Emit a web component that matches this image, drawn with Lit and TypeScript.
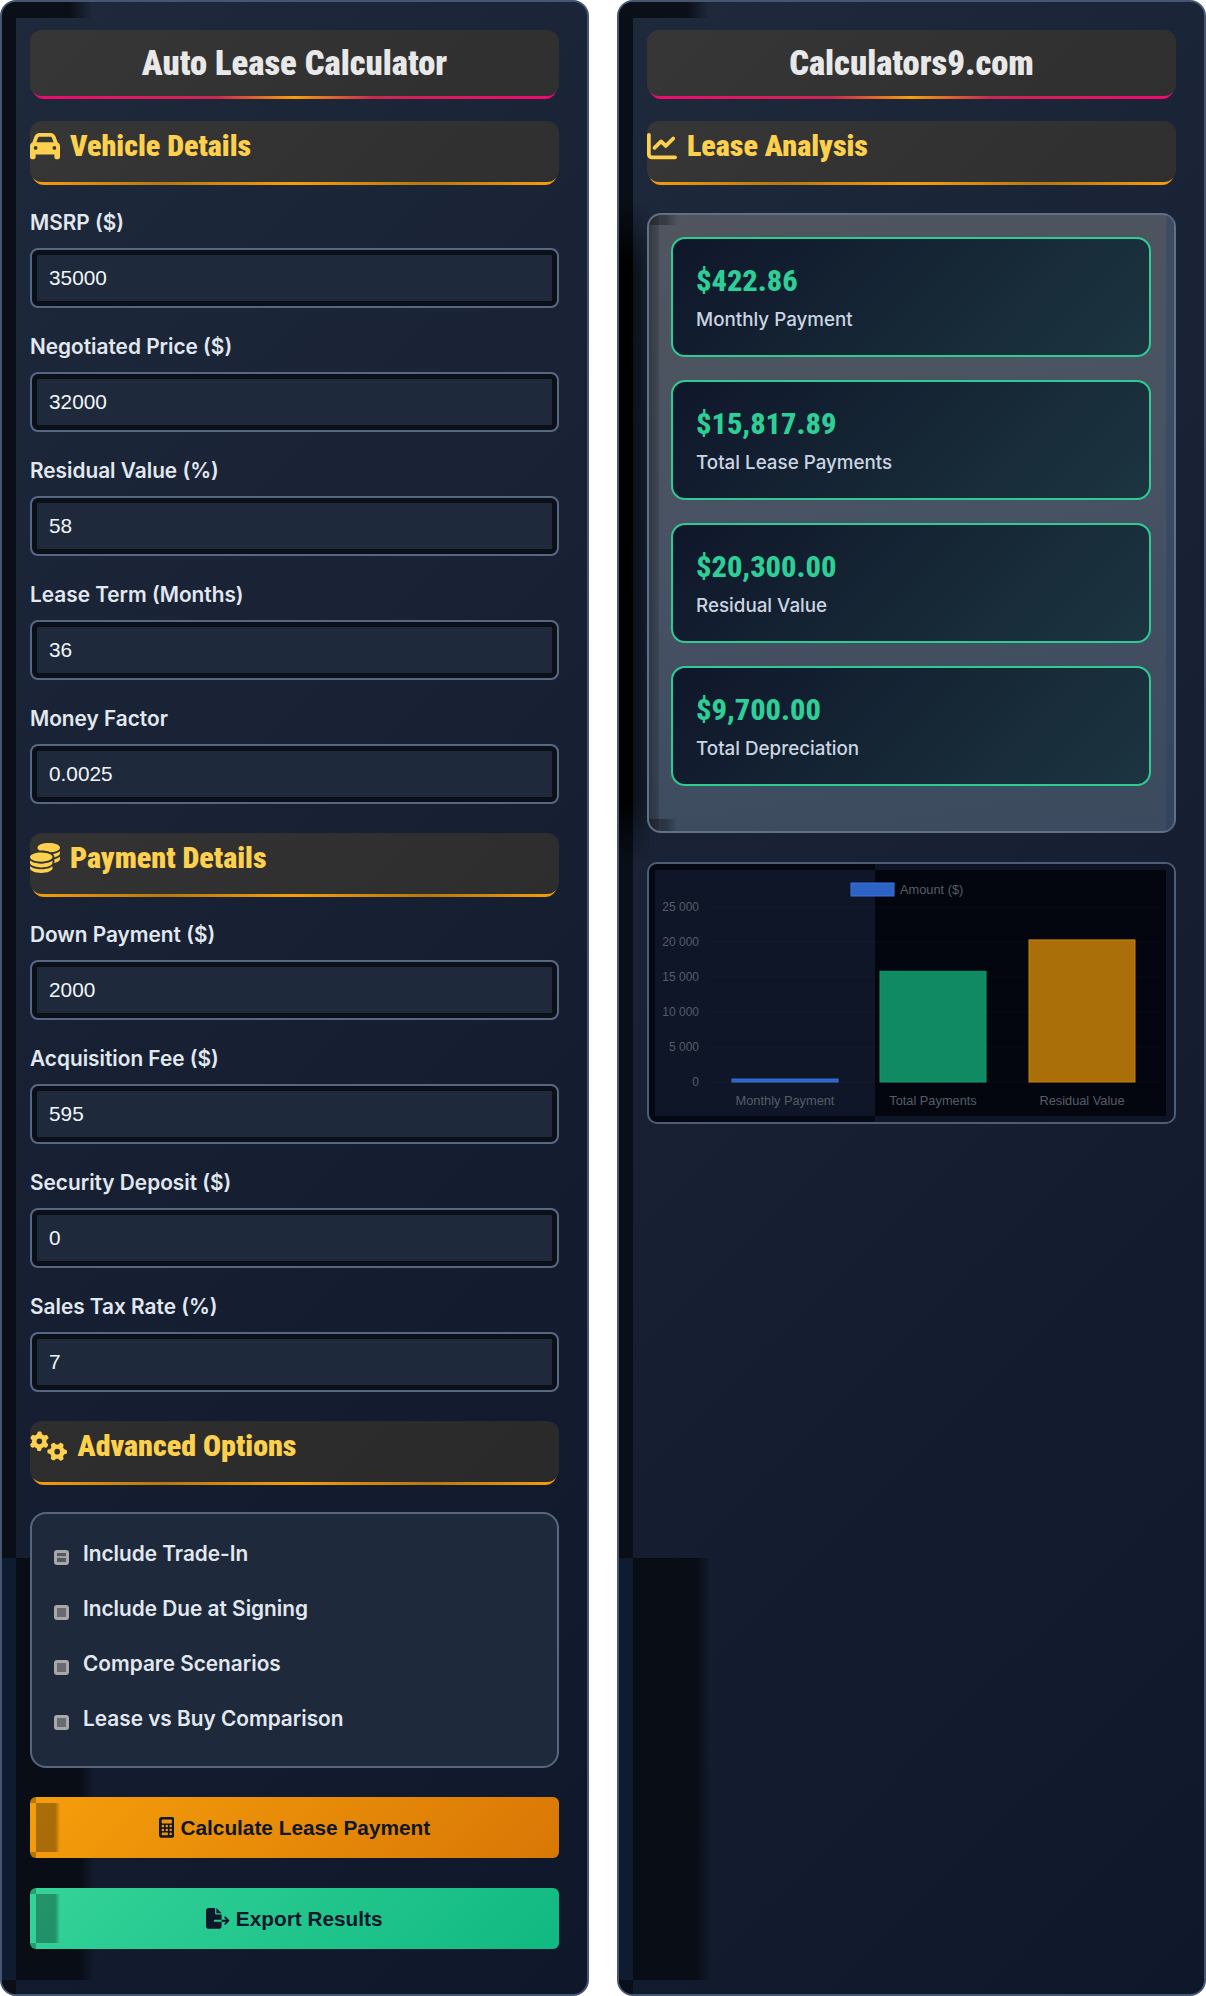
import { LitElement, html, css, svg } from "lit";
import { customElement } from "lit/decorators.js";

const ICONS: Record<string, [number, string]> = {
  car: [512, "M135.2 117.4L109.1 192H402.9l-26.1-74.6C372.3 104.6 360.2 96 346.6 96H165.4c-13.6 0-25.7 8.6-30.2 21.4zM39.6 196.8L74.8 96.3C88.3 57.8 124.6 32 165.4 32H346.6c40.8 0 77.1 25.8 90.6 64.3l35.2 100.5c23.2 9.6 39.6 32.5 39.6 59.2V400v48c0 17.7-14.3 32-32 32H448c-17.7 0-32-14.3-32-32V400H96v48c0 17.7-14.3 32-32 32H32c-17.7 0-32-14.3-32-32V400 256c0-26.7 16.4-49.6 39.6-59.2zM128 288a32 32 0 1 0 -64 0 32 32 0 1 0 64 0zm288 32a32 32 0 1 0 0-64 32 32 0 1 0 0 64z"],
  chart: [512, "M64 64c0-17.7-14.3-32-32-32S0 46.3 0 64V400c0 44.2 35.8 80 80 80H480c17.7 0 32-14.3 32-32s-14.3-32-32-32H80c-8.8 0-16-7.2-16-16V64zm406.6 86.6c12.5-12.5 12.5-32.8 0-45.3s-32.8-12.5-45.3 0L320 210.7l-57.4-57.4c-12.5-12.5-32.8-12.5-45.3 0l-112 112c-12.5 12.5-12.5 32.8 0 45.3s32.8 12.5 45.3 0L240 221.3l57.4 57.4c12.5 12.5 32.8 12.5 45.3 0l128-128z"],
  coins: [512, "M512 80c0 18-14.3 34.6-38.4 48c-29.1 16.1-72.5 27.5-122.3 30.9c-3.7-1.8-7.4-3.5-11.3-5C300.6 137.4 248.2 128 192 128c-8.3 0-16.4 .2-24.5 .6l-1.1-.6C142.3 114.6 128 98 128 80c0-44.2 86-80 192-80S512 35.8 512 80zM160.7 161.1c10.2-.7 20.7-1.1 31.3-1.1c62.2 0 117.4 12.3 152.5 31.4C369.3 204.9 384 221.7 384 240c0 4-.7 7.9-2.1 11.7c-4.6 13.2-17 25.3-35 35.5c0 0 0 0 0 0c-.1 .1-.3 .1-.4 .2l0 0 0 0c-.3 .2-.6 .3-.9 .5c-35 19.4-90.8 32-153.6 32c-59.6 0-112.9-11.3-148.2-29.1c-1.9-.9-3.7-1.9-5.5-2.9C14.3 274.6 0 258 0 240c0-34.8 53.4-64.5 128-75.4c10.5-1.5 21.4-2.7 32.7-3.5zM416 240c0-21.9-10.6-39.9-24.1-53.4c28.3-4.4 54.2-11.4 76.2-20.5c16.3-6.8 31.5-15.2 43.9-25.5V176c0 19.3-16.5 37.1-43.8 50.9c-14.6 7.4-32.4 13.7-52.4 18.5c.1-1.8 .2-3.5 .2-5.3zm-32 96c0 18-14.3 34.6-38.4 48c-1.8 1-3.6 1.9-5.5 2.9C304.9 404.7 251.6 416 192 416c-62.8 0-118.6-12.6-153.6-32C14.3 370.6 0 354 0 336V300.6c12.5 10.3 27.6 18.7 43.9 25.5C83.4 342.6 135.8 352 192 352s108.6-9.4 148.1-25.9c7.8-3.2 15.3-6.9 22.4-10.9c6.1-3.4 11.8-7.2 17.2-11.2c1.5-1.1 2.9-2.3 4.3-3.4V304v5.7V336zm32 0V304 278.1c19-4.2 36.5-9.5 52.1-16c16.3-6.8 31.5-15.2 43.9-25.5V272c0 10.5-5 21-14.9 30.9c-16.3 16.3-45 29.7-81.3 38.4c.1-1.7 .2-3.5 .2-5.3zM192 448c56.2 0 108.6-9.4 148.1-25.9c16.3-6.8 31.5-15.2 43.9-25.5V432c0 44.2-86 80-192 80S0 476.2 0 432V396.6c12.5 10.3 27.6 18.7 43.9 25.5C83.4 438.6 135.8 448 192 448z"],
  gears: [640, "M308.5 135.3c7.1-6.3 9.9-16.2 6.2-25c-2.3-5.3-4.8-10.5-7.6-15.5L304 89.4c-3-5-6.3-9.9-9.8-14.6c-5.7-7.6-15.7-10.1-24.7-7.1l-28.2 9.3c-10.7-8.8-23-16-36.2-20.9L198 27.9c-1.9-9.3-9.1-16.7-18.5-17.8C173.9 9.4 168.2 9 162.4 9c-.3 0-.5 0-.8 0c-5.8 0-11.5 .4-17.1 1.1c-9.4 1.1-16.6 8.4-18.5 17.8L120 56.9c-13.2 5-25.4 12.1-36.2 20.9L55.6 68.6c-9-3-19-.5-24.7 7.1c-3.5 4.7-6.8 9.6-9.9 14.6l-3 5.3c-2.8 5-5.3 10.2-7.6 15.6c-3.7 8.7-.9 18.6 6.2 25l22.2 19.8C32.6 161.9 32 168.9 32 176s.6 14.1 1.7 20.9L11.5 216.7c-7.1 6.3-9.9 16.2-6.2 25c2.3 5.3 4.8 10.5 7.6 15.6l3 5.2c3 5.1 6.3 9.9 9.9 14.6c5.7 7.6 15.7 10.1 24.7 7.1l28.2-9.3c10.7 8.8 23 16 36.2 20.9l6.1 29.1c1.9 9.3 9.1 16.7 18.5 17.8c5.7 .7 11.5 1.1 17.4 1.1s11.7-.4 17.4-1.1c9.4-1.1 16.6-8.5 18.5-17.8l6.1-29.1c13.2-5 25.4-12.1 36.2-20.9l28.2 9.3c9 3 19 .5 24.7-7.1c3.5-4.7 6.8-9.5 9.8-14.6l3.1-5.4c2.8-5 5.3-10.2 7.6-15.5c3.7-8.7 .9-18.6-6.2-25l-22.2-19.8c1.1-6.8 1.7-13.8 1.7-20.9s-.6-14.1-1.7-20.9l22.2-19.8zM112 176a48 48 0 1 1 96 0 48 48 0 1 1 -96 0zM504.7 500.5c6.3 7.1 16.2 9.9 25 6.2c5.3-2.3 10.5-4.8 15.5-7.6l5.4-3.1c5-3 9.9-6.3 14.6-9.8c7.6-5.7 10.1-15.7 7.1-24.7l-9.3-28.2c8.8-10.7 16-23 20.9-36.2l29.1-6.1c9.3-1.9 16.7-9.1 17.8-18.5c.7-5.7 1.1-11.5 1.1-17.4s-.4-11.7-1.1-17.4c-1.1-9.4-8.5-16.6-17.8-18.5l-29.1-6.1c-5-13.2-12.1-25.4-20.9-36.2l9.3-28.2c3-9 .5-19-7.1-24.7c-4.7-3.5-9.6-6.8-14.6-9.9l-5.3-3c-5-2.8-10.2-5.3-15.6-7.6c-8.7-3.7-18.6-.9-25 6.2l-19.8 22.2c-6.8-1.1-13.8-1.7-20.9-1.7s-14.1 .6-20.9 1.7l-19.8-22.2c-6.3-7.1-16.2-9.9-25-6.2c-5.3 2.3-10.5 4.8-15.6 7.6l-5.2 3c-5.1 3-9.9 6.3-14.6 9.9c-7.6 5.7-10.1 15.7-7.1 24.7l9.3 28.2c-8.8 10.7-16 23-20.9 36.2L315.1 313c-9.3 1.9-16.7 9.1-17.8 18.5c-.7 5.7-1.1 11.5-1.1 17.4s.4 11.7 1.1 17.4c1.1 9.4 8.5 16.6 17.8 18.5l29.1 6.1c5 13.2 12.1 25.4 20.9 36.2l-9.3 28.2c-3 9-.5 19 7.1 24.7c4.7 3.5 9.5 6.8 14.6 9.8l5.4 3.1c5 2.8 10.2 5.3 15.5 7.6c8.7 3.7 18.6 .9 25-6.2l19.8-22.2c6.8 1.1 13.8 1.7 20.9 1.7s14.1-.6 20.9-1.7l19.8 22.2zM464 304a48 48 0 1 1 0 96 48 48 0 1 1 0-96z"],
  calc: [384, "M64 0C28.7 0 0 28.7 0 64V448c0 35.3 28.7 64 64 64H320c35.3 0 64-28.7 64-64V64c0-35.3-28.7-64-64-64H64zM96 64H288c17.7 0 32 14.3 32 32v32c0 17.7-14.3 32-32 32H96c-17.7 0-32-14.3-32-32V96c0-17.7 14.3-32 32-32zm32 160a32 32 0 1 1 -64 0 32 32 0 1 1 64 0zM96 352a32 32 0 1 1 0-64 32 32 0 1 1 0 64zM64 416c0-17.7 14.3-32 32-32h96c17.7 0 32 14.3 32 32s-14.3 32-32 32H96c-17.7 0-32-14.3-32-32zM192 256a32 32 0 1 1 0-64 32 32 0 1 1 0 64zm32 64a32 32 0 1 1 -64 0 32 32 0 1 1 64 0zm64-64a32 32 0 1 1 0-64 32 32 0 1 1 0 64zm32 64a32 32 0 1 1 -64 0 32 32 0 1 1 64 0zM288 448a32 32 0 1 1 0-64 32 32 0 1 1 0 64z"],
  exportf: [576, "M0 64C0 28.7 28.7 0 64 0H224V128c0 17.7 14.3 32 32 32H384V288H216c-13.3 0-24 10.7-24 24s10.7 24 24 24H384V448c0 35.3-28.7 64-64 64H64c-35.3 0-64-28.7-64-64V64zM384 336V288H494.1l-39-39c-9.4-9.4-9.4-24.6 0-33.9s24.6-9.4 33.9 0l80 80c9.4 9.4 9.4 24.6 0 33.9l-80 80c-9.4 9.4-24.6 9.4-33.9 0s-9.4-24.6 0-33.9l39-39H384zm0-208H256V0L384 128z"],
};

const icon = (n: string) => {
  const [w, d] = ICONS[n];
  return html`<svg class="ic" viewBox="0 0 ${w} 512" style="width:${w / 512}em" aria-hidden="true"><path fill="currentColor" d=${d}></path></svg>`;
};

const VEHICLE = [["MSRP ($)", "35000"], ["Negotiated Price ($)", "32000"], ["Residual Value (%)", "58"], ["Lease Term (Months)", "36"], ["Money Factor", "0.0025"]];
const PAYMENT = [["Down Payment ($)", "2000"], ["Acquisition Fee ($)", "595"], ["Security Deposit ($)", "0"], ["Sales Tax Rate (%)", "7"]];
const OPTIONS = ["Include Trade-In", "Include Due at Signing", "Compare Scenarios", "Lease vs Buy Comparison"];
const RESULTS = [["$422.86", "Monthly Payment"], ["$15,817.89", "Total Lease Payments"], ["$20,300.00", "Residual Value"], ["$9,700.00", "Total Depreciation"]];
const TICKS = [25000, 20000, 15000, 10000, 5000, 0];
const BARS = [
  { label: "Monthly Payment", value: 422.86, x: 77, fill: "#2d63c4", edge: "#3b74dc" },
  { label: "Total Payments", value: 15817.89, x: 225, fill: "#0f8a62", edge: "#129a6e" },
  { label: "Residual Value", value: 20300, x: 374, fill: "#aa6f08", edge: "#c98210" },
];

@customElement("app-root")
export class AppRoot extends LitElement {
  static styles = css`
    :host { display: block; width: 1206px; height: 1996px; background: #fff; font-family: "Inter", "Liberation Sans", sans-serif; }
    * { box-sizing: border-box; }
    .page { display: grid; grid-template-columns: 589px 589px; gap: 28px; height: 1996px; }
    .panel { position: relative; overflow: hidden; border: 2px solid #465670; border-radius: 16px; padding: 28px; background: linear-gradient(135deg, #1e293b, #0f172a); }
    .panel > .content { position: relative; }
    .art { position: absolute; }
    .a-top { left: 0; top: 0; width: 90px; height: 16px; background: linear-gradient(90deg, #0b1018 75%, rgba(11,16,24,0)); }
    .a-strip { left: 0; top: 16px; width: 14px; height: 1540px; background: #0a0f17; }
    .a-low { left: 0; top: 1556px; width: 14px; height: 422px; background: #0f1c30; }
    .a-block { left: 14px; top: 1556px; width: 78px; height: 422px; background: linear-gradient(90deg, #090d15 82%, rgba(9,13,21,0)); }
    .a-corner { left: 0; top: 1978px; width: 14px; height: 16px; background: #0a0f17; }
    .a-shade { left: 0; top: 200px; width: 30px; height: 660px; background: linear-gradient(90deg, #000 0 14px, rgba(0,0,0,.55) 14px, rgba(0,0,0,.2) 100%); -webkit-mask-image: linear-gradient(180deg, transparent, #000 10%, #000 90%, transparent); mask-image: linear-gradient(180deg, transparent, #000 10%, #000 90%, transparent); }

    .title, .head { position: relative; z-index: 0; }
    .title::before, .head::before { content: ""; position: absolute; inset: 0; z-index: -1; border-radius: 12px; background: linear-gradient(135deg, #363636, #2f2f2f); }
    .title::after, .head::after { content: ""; position: absolute; top: 50%; z-index: -2; border-radius: 0 0 12px 12px; }
    .title { height: 66px; margin-bottom: 25px; display: flex; align-items: center; justify-content: center; padding-top: 1px; color: #e8e8e8; font: 900 34.6px/1 "Roboto", sans-serif; font-stretch: 75%; }
    .title::after { left: 2px; right: 2px; bottom: -3px; background: linear-gradient(90deg, #ef0a73, #c9294f 35%, #f59e0b 50%, #c9294f 65%, #ef0a73); }
    .head { height: 61px; margin-bottom: 26px; padding-top: 7px; display: flex; align-items: flex-start; gap: 10px; color: #fdd14d; font: 900 30px/36px "Roboto", sans-serif; font-stretch: 75%; }
    .head::after { left: 2px; right: 2px; bottom: -3px; background: linear-gradient(90deg, #f59e0b, #b8780f 25%, #f59e0b 50%, #b8780f 75%, #f59e0b); }
    .head .ic { margin-top: 3px; font-size: 30px; }
    .head.mid { margin-top: 29px; }
    .head.mid::before { background: linear-gradient(135deg, #333, #2d2d2d); }
    .head.dark { margin-top: 29px; margin-bottom: 30px; }
    .head.dark::before { background: linear-gradient(135deg, #2e2e2e, #2a2a2a); }
    .head.right { margin-bottom: 31px; }
    .ic { display: block; height: 1em; flex: none; }

    .field { margin-bottom: 24px; }
    .field label { display: block; height: 30px; margin-bottom: 10px; color: #e2e8f0; font: 600 20.8px/30px "Inter", sans-serif; }
    .field input { display: block; width: 100%; height: 60px; padding: 0 17px; border: 2px solid #566783; border-radius: 8px; outline: 0; background: #1e293b; box-shadow: inset 0 0 0 5px #0a0f18; color: #f1f5f9; font: 400 20.8px "Liberation Sans", sans-serif; }

    .options { height: 256px; margin-bottom: 29px; padding: 16px 22px; border: 2px solid #56667f; border-radius: 16px; background: #1e293b; display: flex; flex-direction: column; }
    .opt { height: 56px; display: flex; align-items: center; gap: 14px; color: #e2e8f0; font: 600 20.8px "Inter", sans-serif; }
    .opt input { appearance: none; -webkit-appearance: none; margin: 0; width: 15px; height: 15px; border: 3px solid #a8a8a8; border-radius: 3px; background: #686b71; flex: none; }
    .opt input.first { background: linear-gradient(#55585e 0 35%, #9a9da2 35% 60%, #55585e 60%); }
    .opt span { position: relative; top: -4px; }

    .btn { position: relative; overflow: hidden; display: flex; align-items: center; justify-content: center; gap: 6px; width: 100%; height: 61px; border: 0; border-radius: 6px; color: #0f172a; font: 700 20.8px "Liberation Sans", sans-serif; }
    .btn .ic { position: relative; }
    .btn + .btn { margin-top: 30px; }
    .btn.calc { background: linear-gradient(135deg, #f59e0b, #d97706); }
    .btn.exp { background: linear-gradient(135deg, #34d399, #10b981); }
    .btn::before { content: ""; position: absolute; left: 6px; top: 6px; bottom: 6px; width: 24px; background: linear-gradient(90deg, rgba(0,0,0,.3) 80%, rgba(0,0,0,0)); }
    .btn::after { content: ""; position: absolute; left: 0; top: 0; bottom: 0; width: 6px; background: linear-gradient(180deg, rgba(0,0,0,.25) 0 6px, rgba(0,0,0,0) 6px calc(100% - 6px), rgba(0,0,0,.25) calc(100% - 6px)); }

    .results { position: relative; height: 620px; padding: 22px 23px 22px 22px; margin-bottom: 29px; border: 2px solid #5f7089; border-radius: 14px; background: linear-gradient(170deg, #50555e 0%, #475263 50%, #3b4a5e 100%); display: flex; flex-direction: column; gap: 23px; }
    .results::before { content: ""; position: absolute; left: 0; top: 0; bottom: 0; width: 28px; border-radius: 12px 0 0 12px;
      background:
        linear-gradient(90deg, rgba(0,0,0,.3) 60%, rgba(0,0,0,0)) top left / 28px 10px no-repeat,
        linear-gradient(90deg, rgba(0,0,0,.3) 60%, rgba(0,0,0,0)) bottom left / 28px 12px no-repeat,
        linear-gradient(90deg, rgba(0,0,0,.32), rgba(0,0,0,.12)) left / 10px 100% no-repeat; }
    .results::after { content: ""; position: absolute; right: 0; top: 0; bottom: 0; width: 8px; background: rgba(30,58,100,.3); border-radius: 0 12px 12px 0; }
    .card { position: relative; z-index: 1; height: 120px; padding: 19px 23px; border: 2px solid #2ecc94; border-radius: 14px; background: linear-gradient(135deg, #0f172a, #1c3540); }
    .val { color: #2dcf96; font: 800 30.4px/46px "Roboto", sans-serif; font-stretch: 75%; }
    .lab { margin-top: 1.5px; color: #cbd5e1; font: 500 18.8px/28px "Inter", sans-serif; }

    .chart { position: relative; height: 262px; border: 2px solid #4d5d76; border-radius: 10px; overflow: hidden; background: linear-gradient(90deg, #040812 0 226px, #0d1526 226px); }
    .chart svg { position: absolute; left: 6px; top: 6px; width: 511px; height: 246px; background: linear-gradient(90deg, #0e1627 0 220px, #03060e 220px); }
    .chart text { font-family: "Liberation Sans", sans-serif; font-size: 12.8px; fill: #565d68; }
    .chart text.tick { font-size: 12px; }
  `;

  private art() {
    return html`<div class="art a-top"></div><div class="art a-strip"></div><div class="art a-low"></div><div class="art a-block"></div><div class="art a-corner"></div>`;
  }

  private field(f: string[]) {
    return html`<div class="field"><label>${f[0]}</label><input type="number" .value=${f[1]} /></div>`;
  }

  private chart() {
    const base = 212; // svg-local y of the zero line
    const scale = 35 / 5000;
    return html`<div class="chart">
      <svg viewBox="0 0 511 246" aria-label="Chart">
        <rect x="196" y="13" width="43" height="13" fill="#2d63c4" stroke="#3b74dc"></rect>
        <text x="245" y="24">Amount ($)</text>
        ${TICKS.map((t) => {
          const y = base - t * scale;
          return svg`<line x1="57" x2="505" y1=${y} y2=${y} stroke="#fff" stroke-opacity=".025"></line>
            <text class="tick" x="44" y=${y + 3.5} text-anchor="end">${t === 0 ? "0" : t.toLocaleString("fr-FR").replace(/\s/g, " ")}</text>`;
        })}
        ${BARS.map((b) => {
          const h = b.value * scale;
          return svg`<rect x=${b.x} y=${base - h} width="106" height=${h} fill=${b.fill} stroke=${b.edge}></rect>
            <text x=${b.x + 53} y="235" text-anchor="middle">${b.label}</text>`;
        })}
      </svg>
    </div>`;
  }

  render() {
    return html`<div class="page">
      <section class="panel">
        ${this.art()}
        <div class="content">
          <div class="title">Auto Lease Calculator</div>
          <div class="head">${icon("car")}<span>Vehicle Details</span></div>
          ${VEHICLE.map((f) => this.field(f))}
          <div class="head mid">${icon("coins")}<span>Payment Details</span></div>
          ${PAYMENT.map((f) => this.field(f))}
          <div class="head dark">${icon("gears")}<span>Advanced Options</span></div>
          <div class="options">
            ${OPTIONS.map((o, i) => html`<label class="opt"><input type="checkbox" class=${i === 0 ? "first" : ""} /><span>${o}</span></label>`)}
          </div>
          <button class="btn calc">${icon("calc")}<span>Calculate Lease Payment</span></button>
          <button class="btn exp">${icon("exportf")}<span>Export Results</span></button>
        </div>
      </section>
      <section class="panel">
        ${this.art()}
        <div class="art a-shade"></div>
        <div class="content">
          <div class="title">Calculators9.com</div>
          <div class="head right">${icon("chart")}<span>Lease Analysis</span></div>
          <div class="results">
            ${RESULTS.map((r) => html`<div class="card"><div class="val">${r[0]}</div><div class="lab">${r[1]}</div></div>`)}
          </div>
          ${this.chart()}
        </div>
      </section>
    </div>`;
  }
}
